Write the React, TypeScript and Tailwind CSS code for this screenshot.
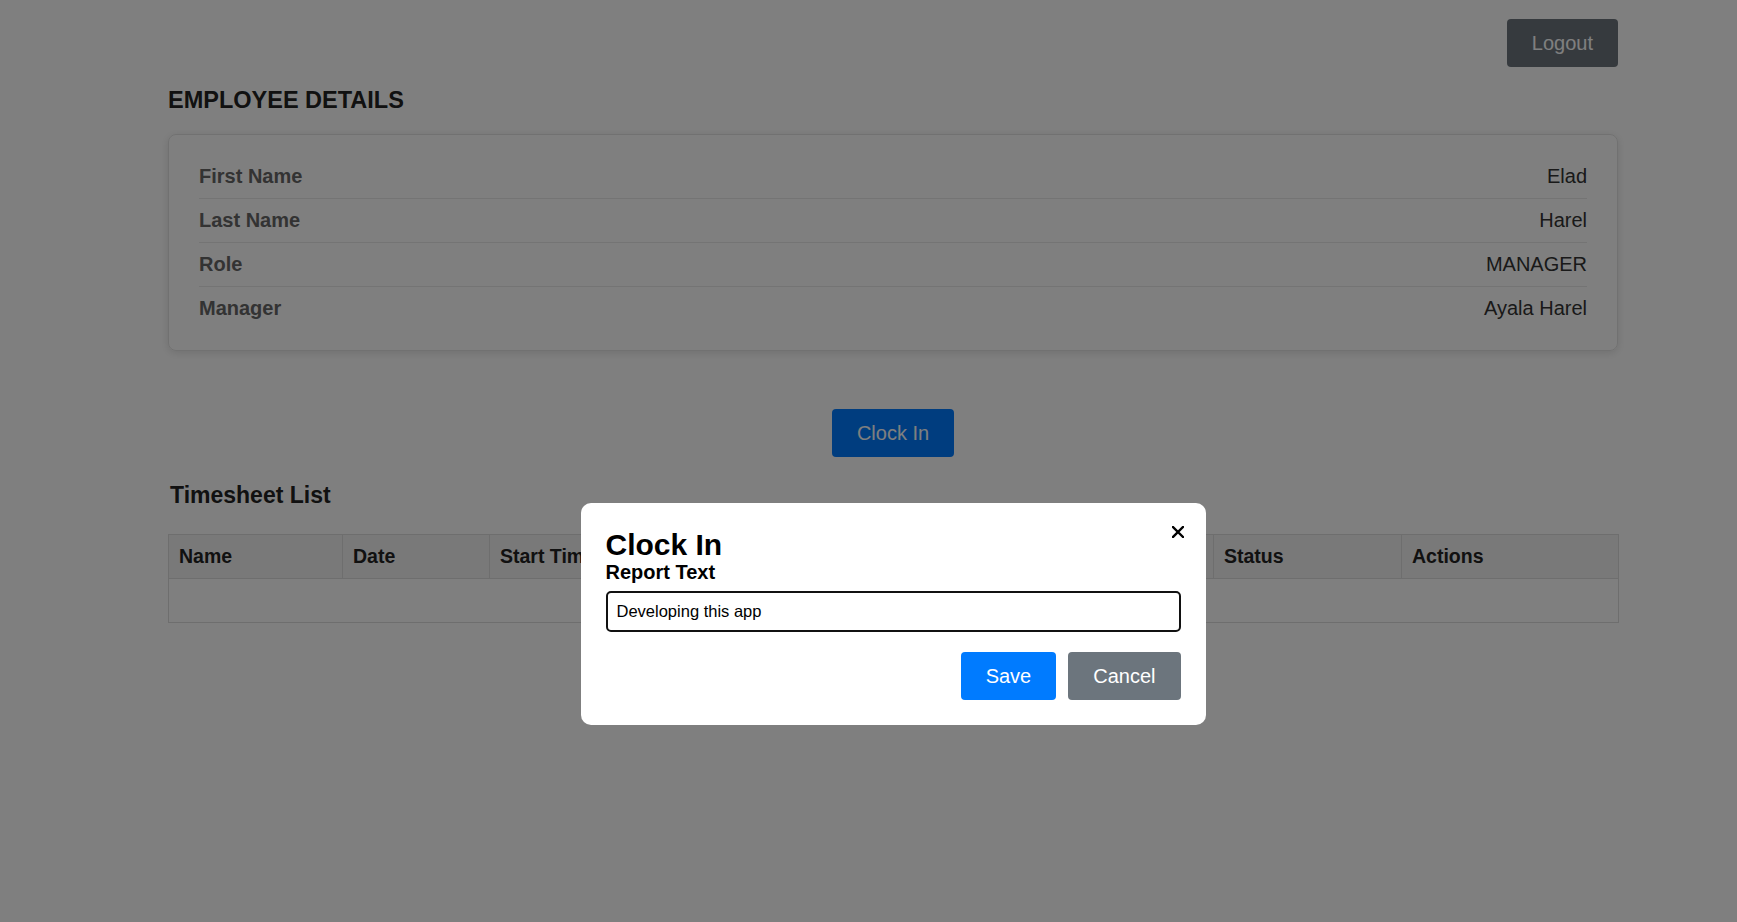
import React, { useState } from 'react';

interface DetailRow {
  label: string;
  value: string;
}

const details: DetailRow[] = [
  { label: 'First Name', value: 'Elad' },
  { label: 'Last Name', value: 'Harel' },
  { label: 'Role', value: 'MANAGER' },
  { label: 'Manager', value: 'Ayala Harel' },
];

const columns = [
  { title: 'Name', width: 'w-[174px]' },
  { title: 'Date', width: 'w-[147px]' },
  { title: 'Start Time', width: 'w-[200px]' },
  { title: 'End Time', width: 'w-[200px]' },
  { title: 'Report Text', width: 'w-[324px]' },
  { title: 'Status', width: 'w-[188px]' },
  { title: 'Actions', width: 'w-[217px]' },
];

const ClockInModal: React.FC<{ onClose: () => void }> = ({ onClose }) => {
  const [text, setText] = useState('Developing this app');

  return (
    <div className="fixed inset-0 bg-black/50 pl-[168px] pr-[119px] pt-[503px] flex justify-center items-start">
      <div className="relative w-[625px] bg-white rounded-[10px] p-[25px]">
        {/* Close */}
        <button onClick={onClose} className="absolute top-[23px] right-[22px] w-[12px] h-[12px]">
          <svg width="12" height="12" viewBox="0 0 12 12" className="block">
            <path d="M1 1 L11 11 M11 1 L1 11" stroke="#000" strokeWidth="2.4" strokeLinecap="square" />
          </svg>
        </button>

        <h2 className="text-[30px] leading-[33px] font-bold text-black">Clock In</h2>
        <label className="block text-[20px] leading-[23px] font-bold text-black">Report Text</label>
        <input
          value={text}
          onChange={(e) => setText(e.target.value)}
          className="mt-[7px] block w-full h-[41px] border-2 border-[#111] rounded-[5px] px-[9px] text-[16.5px] text-black outline-none"
        />

        <div className="mt-[20px] flex justify-end gap-[12px]">
          <button className="h-[48px] px-[25px] rounded-[4px] bg-[#007bff] text-white text-[20px]">Save</button>
          <button onClick={onClose} className="h-[48px] px-[25px] rounded-[4px] bg-[#6c757d] text-white text-[20px]">
            Cancel
          </button>
        </div>
      </div>
    </div>
  );
};

const App: React.FC = () => {
  const [showModal, setShowModal] = useState(true);

  return (
    <div className="min-h-screen bg-white pl-[168px] pr-[119px] font-['Liberation_Sans',Arial,sans-serif]">
      {/* Top bar */}
      <div className="pt-[19px] flex justify-end">
        <button className="h-[48px] px-[25px] rounded-[4px] bg-[#6c757d] text-white text-[20px]">Logout</button>
      </div>

      {/* Employee details */}
      <h1 className="mt-[20px] text-[23.5px] leading-[26px] font-bold text-[#222]">EMPLOYEE DETAILS</h1>
      <div className="mt-[21px] border border-[#e3e3e3] rounded-[8px] shadow-[0_2px_8px_rgba(0,0,0,0.12)] px-[30px] pt-[20px] pb-[20px]">
        {details.map((row, i) => (
          <div
            key={row.label}
            className={`flex justify-between items-center py-[10px] text-[20px] leading-[23px] ${
              i < details.length - 1 ? 'border-b border-[#e8e8e8]' : ''
            }`}
          >
            <span className="font-bold text-[#666]">{row.label}</span>
            <span className="text-[#333]">{row.value}</span>
          </div>
        ))}
      </div>

      <div className="mt-[58px] flex justify-center">
        <button
          onClick={() => setShowModal(true)}
          className="h-[48px] px-[25px] rounded-[4px] bg-[#007bff] text-white text-[20px]"
        >
          Clock In
        </button>
      </div>

      {/* Timesheet list */}
      <h2 className="mt-[25px] ml-[2px] text-[23px] leading-[26px] font-bold text-[#222]">Timesheet List</h2>
      <table className="mt-[26px] w-full border-collapse table-fixed">
        <thead>
          <tr className="bg-[#f2f2f2]">
            {columns.map((c) => (
              <th
                key={c.title}
                className={`${c.width} h-[44px] border border-[#ddd] px-[10px] text-left text-[19.5px] font-bold text-[#222]`}
              >
                {c.title}
              </th>
            ))}
          </tr>
        </thead>
        <tbody>
          <tr>
            <td colSpan={7} className="h-[44px] border border-[#ddd]"></td>
          </tr>
        </tbody>
      </table>

      {showModal && <ClockInModal onClose={() => setShowModal(false)} />}
    </div>
  );
};

export default App;
